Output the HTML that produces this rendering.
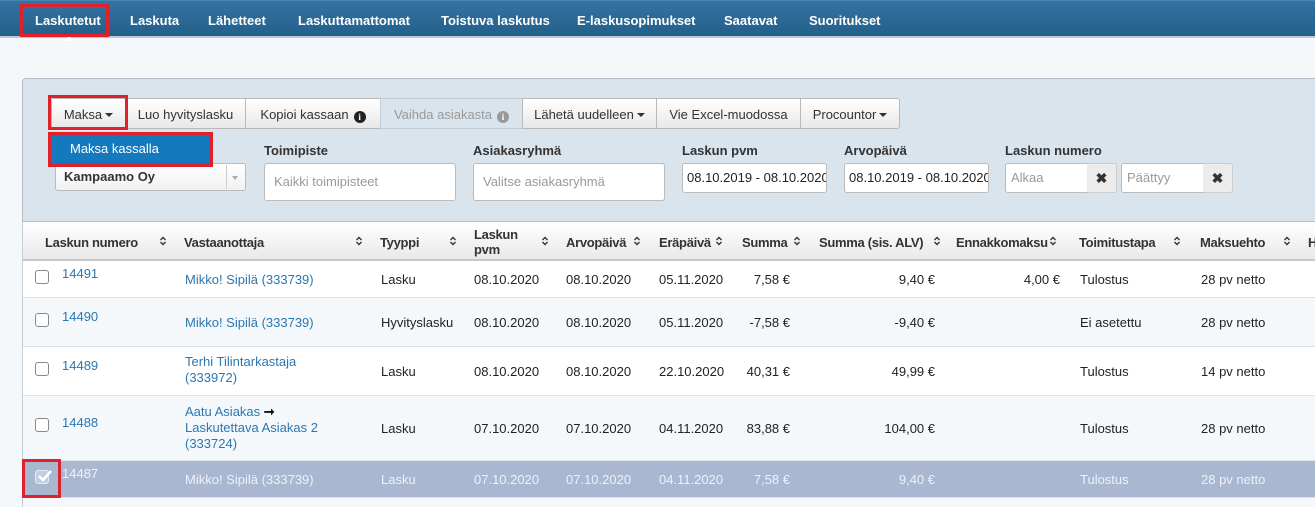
<!DOCTYPE html>
<html><head><meta charset="utf-8"><style>
*{box-sizing:border-box;margin:0;padding:0}
body{width:1315px;height:507px;overflow:hidden;background:#f5f8fb;font-family:"Liberation Sans",Arial,sans-serif;font-size:13px;color:#222;position:relative}
.a{position:absolute;white-space:nowrap}
.nav{position:absolute;left:0;top:0;width:1315px;height:38px;background:linear-gradient(#3573a0,#235f8b);border-top:1px solid #4a86b3;border-bottom:2px solid #b9c8d4}
.nav span{position:absolute;top:12px;color:#fff;font-weight:bold;font-size:13px}
.red{position:absolute;border:3px solid #e0202a}
.panel{position:absolute;left:22px;top:78px;width:1300px;height:144px;background:#d9e4ed;border:1px solid #b3c0cb;border-right:none;border-radius:4px 0 0 0}
.btn{position:absolute;top:98px;height:31px;background:linear-gradient(#fff,#e8e8e8);border:1px solid #b8b8b8;padding-top:8px;text-align:center;color:#333;white-space:nowrap}
.lbl{position:absolute;font-weight:bold;color:#333;font-size:13px}
.inp{position:absolute;background:#fff;border:1px solid #bbb;border-radius:3px;padding:0 9px;color:#999;line-height:36px;white-space:nowrap}
.hdr{position:absolute;left:23px;top:222px;width:1292px;height:39px;background:linear-gradient(#fff,#e9e9ec);border-bottom:2px solid #c8c8c8}
.hdr span{position:absolute;font-weight:bold;color:#333;white-space:nowrap;letter-spacing:-0.3px}
.hdr svg{position:absolute;top:14px}
.row{position:absolute;left:23px;width:1292px;border-bottom:1px solid #dde2e8}
.cb{position:absolute;left:12px;width:14px;height:14px;border:1.5px solid #888;border-radius:3px;background:#fff}
.lnk{color:#2a78b0}
.sel,.sel .lnk{color:#eef2f8}
.ic{display:inline-block;width:12px;height:12px;border-radius:50%;background:#222;color:#fff;font-size:9px;font-weight:bold;text-align:center;line-height:12px;vertical-align:-1px;margin-left:5px;font-family:"Liberation Serif",serif}
.car{display:inline-block;width:0;height:0;border-left:4px solid transparent;border-right:4px solid transparent;border-top:4px solid #333;vertical-align:2px;margin-left:3px}
.x{position:absolute;top:163px;width:30px;height:30px;background:#ececec;border:1px solid #ccc;border-left:none;border-radius:0 3px 3px 0;text-align:center;line-height:29px;font-weight:bold;color:#333;font-size:14px}
</style></head><body>
<svg width="0" height="0" style="position:absolute"><defs><symbol id="s" viewBox="0 0 8 10"><polyline points="1.5,4 4,1.5 6.5,4" fill="none" stroke="#333" stroke-width="1.4"/><polyline points="1.5,6 4,8.5 6.5,6" fill="none" stroke="#333" stroke-width="1.4"/></symbol></defs></svg>
<div class="nav">
<span style="left:35px">Laskutetut</span>
<span style="left:130px">Laskuta</span>
<span style="left:208px">Lähetteet</span>
<span style="left:298px">Laskuttamattomat</span>
<span style="left:441px">Toistuva laskutus</span>
<span style="left:577px">E-laskusopimukset</span>
<span style="left:724px">Saatavat</span>
<span style="left:809px">Suoritukset</span>
</div>
<div class="a" style="left:64px;top:36px;width:0;height:0;border-left:5px solid transparent;border-right:5px solid transparent;border-bottom:5px solid #fff"></div>
<div class="red" style="left:20px;top:4px;width:89px;height:33px"></div>

<div class="panel"></div>
<div class="btn" style="left:51px;width:75px;border-radius:3px 0 0 3px">Maksa<span class="car"></span></div>
<div class="btn" style="left:125px;width:121px">Luo hyvityslasku</div>
<div class="btn" style="left:245px;width:136px">Kopioi kassaan<span class="ic">i</span></div>
<div class="btn" style="left:380px;width:143px;background:#d9e4ed;color:#999;border-color:#c3ccd4">Vaihda asiakasta<span class="ic" style="background:#999">i</span></div>
<div class="btn" style="left:522px;width:135px">Lähetä uudelleen<span class="car"></span></div>
<div class="btn" style="left:656px;width:145px">Vie Excel-muodossa</div>
<div class="btn" style="left:800px;width:100px;border-radius:0 3px 3px 0">Procountor<span class="car"></span></div>
<div class="red" style="left:48px;top:95px;width:80px;height:35px"></div>

<div class="inp" style="left:55px;top:163px;width:191px;height:28px;line-height:26px;color:#333;font-weight:bold;background:linear-gradient(#fff,#f1f1f1);padding-left:8px">Kampaamo Oy</div>
<div class="a" style="left:226px;top:165px;width:1px;height:24px;background:#ccc"></div>
<div class="a" style="left:232px;top:176px;border-left:3px solid transparent;border-right:3px solid transparent;border-top:4px solid #aaa"></div>
<div class="a" style="left:48px;top:132px;width:165px;height:35px;border:3px solid #e0202a;background:#0a7ac4"></div>
<div class="a" style="left:52px;top:136px;width:155px;height:26px;background:#1479bd;color:#fff;padding:5px 0 0 18px">Maksa kassalla</div>

<div class="lbl" style="left:264px;top:143px">Toimipiste</div>
<div class="inp" style="left:264px;top:163px;width:192px;height:38px">Kaikki toimipisteet</div>
<div class="lbl" style="left:473px;top:143px">Asiakasryhmä</div>
<div class="inp" style="left:473px;top:163px;width:192px;height:38px">Valitse asiakasryhmä</div>
<div class="lbl" style="left:682px;top:143px">Laskun pvm</div>
<div class="inp" style="left:682px;top:163px;width:145px;height:30px;line-height:28px;color:#222;padding:0 4px;overflow:hidden">08.10.2019 - 08.10.2020</div>
<div class="lbl" style="left:844px;top:143px">Arvopäivä</div>
<div class="inp" style="left:844px;top:163px;width:145px;height:30px;line-height:28px;color:#222;padding:0 4px;overflow:hidden">08.10.2019 - 08.10.2020</div>
<div class="lbl" style="left:1005px;top:143px">Laskun numero</div>
<div class="inp" style="left:1005px;top:163px;width:83px;height:30px;line-height:28px;padding:0 5px;border-radius:3px 0 0 3px">Alkaa</div>
<div class="x" style="left:1087px">✖</div>
<div class="inp" style="left:1121px;top:163px;width:83px;height:30px;line-height:28px;padding:0 5px;border-radius:3px 0 0 3px">Päättyy</div>
<div class="x" style="left:1203px">✖</div>

<div class="a" style="left:22px;top:222px;width:1px;height:285px;background:#c8ced4"></div>
<div class="hdr">
<span style="left:22px;top:13px">Laskun numero</span><svg style="left:136px" width="8" height="10"><use href="#s"/></svg>
<span style="left:161px;top:13px">Vastaanottaja</span><svg style="left:332px" width="8" height="10"><use href="#s"/></svg>
<span style="left:357px;top:13px">Tyyppi</span><svg style="left:426px" width="8" height="10"><use href="#s"/></svg>
<span style="left:451px;top:5px;line-height:15px">Laskun<br>pvm</span><svg style="left:518px" width="8" height="10"><use href="#s"/></svg>
<span style="left:543px;top:13px">Arvopäivä</span><svg style="left:610px" width="8" height="10"><use href="#s"/></svg>
<span style="left:636px;top:13px">Eräpäivä</span><svg style="left:692px" width="8" height="10"><use href="#s"/></svg>
<span style="left:719px;top:13px">Summa</span><svg style="left:770px" width="8" height="10"><use href="#s"/></svg>
<span style="left:796px;top:13px">Summa (sis. ALV)</span><svg style="left:910px" width="8" height="10"><use href="#s"/></svg>
<span style="left:933px;top:13px">Ennakkomaksu</span><svg style="left:1026px" width="8" height="10"><use href="#s"/></svg>
<span style="left:1056px;top:13px">Toimitustapa</span><svg style="left:1150px" width="8" height="10"><use href="#s"/></svg>
<span style="left:1177px;top:13px">Maksuehto</span><svg style="left:1260px" width="8" height="10"><use href="#s"/></svg>
<span style="left:1285px;top:13px">H</span>
</div>

<div class="row" style="top:261px;height:37px;background:#fff">
<div class="cb" style="top:9px"></div>
<span class="a lnk" style="left:39px;top:5px">14491</span>
<span class="a lnk" style="left:162px;top:11px">Mikko! Sipilä (333739)</span>
<span class="a" style="left:358px;top:11px">Lasku</span>
<span class="a" style="left:451px;top:11px">08.10.2020</span>
<span class="a" style="left:543px;top:11px">08.10.2020</span>
<span class="a" style="left:636px;top:11px">05.11.2020</span>
<span class="a" style="right:525px;top:11px">7,58 €</span>
<span class="a" style="right:380px;top:11px">9,40 €</span>
<span class="a" style="right:255px;top:11px">4,00 €</span>
<span class="a" style="left:1057px;top:11px">Tulostus</span>
<span class="a" style="left:1178px;top:11px">28 pv netto</span>
</div>
<div class="row" style="top:298px;height:49px;background:#f5f8fb">
<div class="cb" style="top:15px"></div>
<span class="a lnk" style="left:39px;top:11px">14490</span>
<span class="a lnk" style="left:162px;top:17px">Mikko! Sipilä (333739)</span>
<span class="a" style="left:358px;top:17px">Hyvityslasku</span>
<span class="a" style="left:451px;top:17px">08.10.2020</span>
<span class="a" style="left:543px;top:17px">08.10.2020</span>
<span class="a" style="left:636px;top:17px">05.11.2020</span>
<span class="a" style="right:525px;top:17px">-7,58 €</span>
<span class="a" style="right:380px;top:17px">-9,40 €</span>
<span class="a" style="left:1057px;top:17px">Ei asetettu</span>
<span class="a" style="left:1178px;top:17px">28 pv netto</span>
</div>
<div class="row" style="top:347px;height:49px;background:#fff">
<div class="cb" style="top:15px"></div>
<span class="a lnk" style="left:39px;top:11px">14489</span>
<span class="a lnk" style="left:162px;top:7px;line-height:16px">Terhi Tilintarkastaja<br>(333972)</span>
<span class="a" style="left:358px;top:17px">Lasku</span>
<span class="a" style="left:451px;top:17px">08.10.2020</span>
<span class="a" style="left:543px;top:17px">08.10.2020</span>
<span class="a" style="left:636px;top:17px">22.10.2020</span>
<span class="a" style="right:525px;top:17px">40,31 €</span>
<span class="a" style="right:380px;top:17px">49,99 €</span>
<span class="a" style="left:1057px;top:17px">Tulostus</span>
<span class="a" style="left:1178px;top:17px">14 pv netto</span>
</div>
<div class="row" style="top:396px;height:65px;background:#f5f8fb">
<div class="cb" style="top:22px"></div>
<span class="a lnk" style="left:39px;top:19px">14488</span>
<span class="a lnk" style="left:162px;top:8px;line-height:16px">Aatu Asiakas <b style="color:#111">➞</b><br>Laskutettava Asiakas 2<br>(333724)</span>
<span class="a" style="left:358px;top:25px">Lasku</span>
<span class="a" style="left:451px;top:25px">07.10.2020</span>
<span class="a" style="left:543px;top:25px">07.10.2020</span>
<span class="a" style="left:636px;top:25px">04.11.2020</span>
<span class="a" style="right:525px;top:25px">83,88 €</span>
<span class="a" style="right:380px;top:25px">104,00 €</span>
<span class="a" style="left:1057px;top:25px">Tulostus</span>
<span class="a" style="left:1178px;top:25px">28 pv netto</span>
</div>
<div class="row sel" style="top:461px;height:37px;background:#a9b7d0">
<div class="cb" style="top:9px;background:#c3cde0;border-color:#e5eaf3"></div>
<svg class="a" style="left:13px;top:8px" width="16" height="14"><polyline points="3,7 7,11 15,2" fill="none" stroke="#fff" stroke-width="2.5"/></svg>
<span class="a" style="left:39px;top:5px">14487</span>
<span class="a" style="left:162px;top:11px">Mikko! Sipilä (333739)</span>
<span class="a" style="left:358px;top:11px">Lasku</span>
<span class="a" style="left:451px;top:11px">07.10.2020</span>
<span class="a" style="left:543px;top:11px">07.10.2020</span>
<span class="a" style="left:636px;top:11px">04.11.2020</span>
<span class="a" style="right:525px;top:11px">7,58 €</span>
<span class="a" style="right:380px;top:11px">9,40 €</span>
<span class="a" style="left:1057px;top:11px">Tulostus</span>
<span class="a" style="left:1178px;top:11px">28 pv netto</span>
</div>
<div class="red" style="left:22px;top:459px;width:39px;height:39px"></div>
</body></html>
